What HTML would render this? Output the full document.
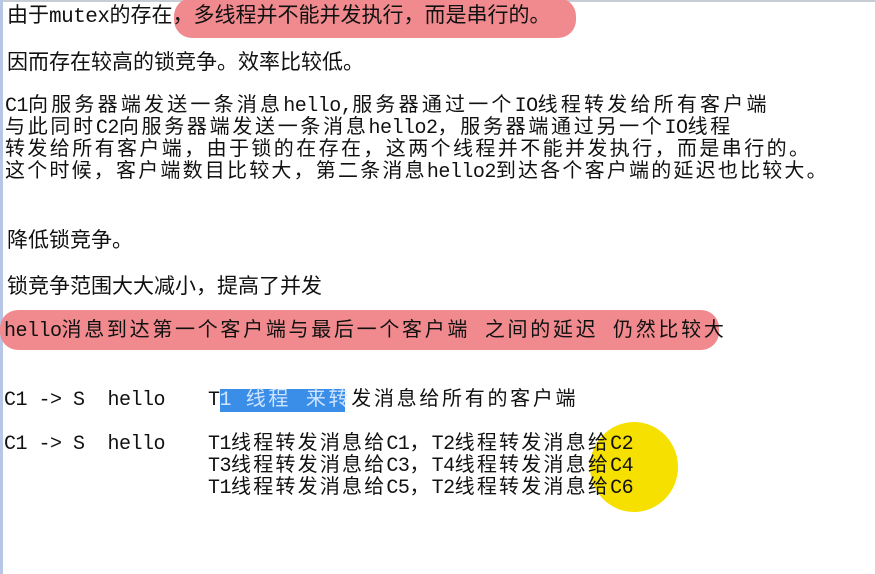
<!DOCTYPE html>
<html><head><meta charset="utf-8"><style>
body{margin:0;width:875px;height:574px;background:#fff;position:relative;overflow:hidden;font-family:"Liberation Mono","Noto Sans CJK SC",monospace;color:#111}
.l{position:absolute;white-space:pre;line-height:24px}
.a{font-size:21px}
.b{font-size:20px;letter-spacing:2.7px}
i{font-style:normal;letter-spacing:-0.5px}
</style></head><body>
<div style="position:absolute;left:0;top:0;width:875px;height:2px;background:#c8ccd4"></div>
<div style="position:absolute;left:0;top:0;width:3px;height:574px;background:#b8c6e6"></div>
<div style="position:absolute;left:174px;top:-2px;width:402px;height:40px;background:#f08a8e;border-radius:18px"></div>
<div style="position:absolute;left:0;top:310px;width:719px;height:40px;background:#f08a8e;border-radius:18px"></div>
<div style="position:absolute;left:220px;top:389px;width:125px;height:23px;background:#3b8ee8"></div>
<div style="position:absolute;left:590px;top:422px;width:88px;height:90px;background:#f6e000;border-radius:50%"></div>
<div class="l a" style="left:7px;top:6px">由于<i>mutex</i>的存在，多线程并不能并发执行，而是串行的。</div>
<div class="l a" style="left:7px;top:53px">因而存在较高的锁竞争。效率比较低。</div>
<div class="l b" style="left:5px;top:95px;letter-spacing:3.2px"><i>C1</i>向服务器端发送一条消息<i>hello,</i>服务器通过一个<i>IO</i>线程转发给所有客户端</div>
<div class="l b" style="left:5px;top:117px"><span>与此同时</span><i>C2</i>向服务器端发送一条消息<i>hello2</i>，服务器端通过另一个<i>IO</i>线程</div>
<div class="l b" style="left:5px;top:139px;letter-spacing:2.4px">转发给所有客户端，由于锁的在存在，这两个线程并不能并发执行，而是串行的。</div>
<div class="l b" style="left:5px;top:161px;letter-spacing:2.2px">这个时候，客户端数目比较大，第二条消息<i>hello2</i>到达各个客户端的延迟也比较大。</div>
<div class="l a" style="left:7px;top:231px">降低锁竞争。</div>
<div class="l a" style="left:7px;top:277px">锁竞争范围大大减小，提高了并发</div>
<div class="l b" style="left:4px;top:320px"><i>hello</i>消息到达第一个客户端与最后一个客户端 之间的延迟 仍然比较大</div>
<div class="l" style="left:4px;top:389px;font-size:20px;letter-spacing:-0.5px">C1 -&gt; S  hello</div>
<div class="l b" style="left:208px;top:389px"><i>T</i><span style="color:#cfe4ff"><i>1</i> 线程 来转</span>发消息给所有的客户端</div>
<div class="l" style="left:4px;top:433px;font-size:20px;letter-spacing:-0.5px">C1 -&gt; S  hello</div>
<div class="l b" style="left:208px;top:433px;letter-spacing:2.2px"><i>T1</i>线程转发消息给<i>C1</i>，<i>T2</i>线程转发消息给<i>C2</i></div>
<div class="l b" style="left:208px;top:455px;letter-spacing:2.2px"><i>T3</i>线程转发消息给<i>C3</i>，<i>T4</i>线程转发消息给<i>C4</i></div>
<div class="l b" style="left:208px;top:477px;letter-spacing:2.2px"><i>T1</i>线程转发消息给<i>C5</i>，<i>T2</i>线程转发消息给<i>C6</i></div>
</body></html>
